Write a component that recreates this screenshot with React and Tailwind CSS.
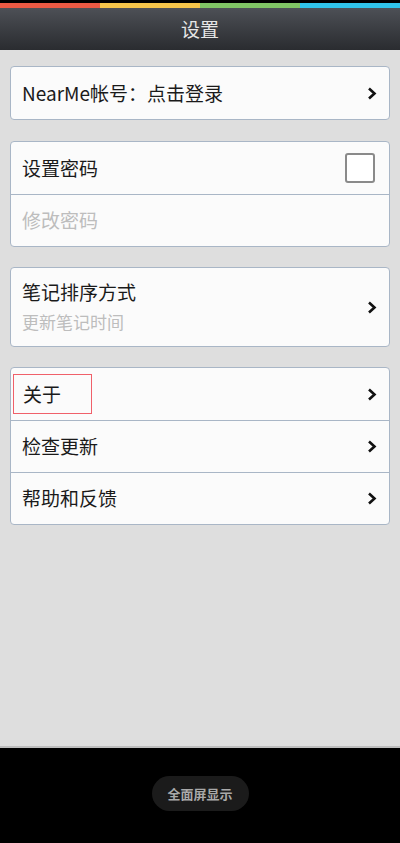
import React from 'react';

const Chevron = () => (
  <svg width="10" height="13" viewBox="0 0 10 13" className="shrink-0">
    <polyline points="2,1.5 7.5,6.5 2,11.5" fill="none" stroke="#111" strokeWidth="2.6" strokeLinejoin="miter" />
  </svg>
);

const Row = ({ children, right, divider }) => (
  <div className={`h-[52px] flex items-center justify-between pl-[11px] pr-[12px] ${divider ? 'border-t border-[#a9b6c6]' : ''}`}>
    {children}
    {right}
  </div>
);

const Card = ({ children, className = '' }) => (
  <div className={`mx-[10px] bg-[#fbfbfb] border border-[#a9b6c6] rounded-[4px] overflow-hidden ${className}`}>
    {children}
  </div>
);

const App = () => {
  return (
    <div className="w-[400px] h-[843px] flex flex-col bg-black" style={{ fontFamily: '"Noto Sans CJK SC", "Noto Sans", sans-serif' }}>
      {/* 顶部彩条 */}
      <div className="h-[3px] bg-black" />
      <div className="h-[5px] flex">
        <div className="flex-1 bg-[#ec5a44]" />
        <div className="flex-1 bg-[#f6c54a]" />
        <div className="flex-1 bg-[#80c565]" />
        <div className="flex-1 bg-[#30c4ea]" />
      </div>
      {/* 标题栏 */}
      <div className="h-[42px] flex items-center justify-center bg-gradient-to-b from-[#4d5056] to-[#2a2c30]">
        <span className="text-[19px] text-[#e6e6e6]">设置</span>
      </div>

      {/* 设置列表 */}
      <div className="h-[698px] bg-[#dedede] pt-[16px] border-b-2 border-[#bdbdbd]">
        <Card>
          <Row right={<Chevron />}>
            <span className="text-[19px] text-[#1a1a1a]">NearMe帐号：点击登录</span>
          </Row>
        </Card>

        <Card className="mt-[21px]">
          <Row right={<div className="w-[30px] h-[30px] border-2 border-[#8a8a8a] rounded-[3px] bg-white mr-[2px]" />}>
            <span className="text-[19px] text-[#1a1a1a]">设置密码</span>
          </Row>
          <Row divider>
            <span className="text-[19px] text-[#bdbdbd]">修改密码</span>
          </Row>
        </Card>

        <Card className="mt-[20px]">
          <div className="h-[78px] flex items-center justify-between pl-[11px] pr-[12px]">
            <div className="flex flex-col">
              <span className="text-[19px] leading-[30px] text-[#1a1a1a]">笔记排序方式</span>
              <span className="text-[17px] leading-[30px] text-[#bdbdbd]">更新笔记时间</span>
            </div>
            <Chevron />
          </div>
        </Card>

        <Card className="mt-[20px]">
          <Row right={<Chevron />}>
            <div className="-ml-[9px] w-[79px] h-[40px] border border-[#f0606a] flex items-center pl-[9px]">
              <span className="text-[19px] text-[#1a1a1a]">关于</span>
            </div>
          </Row>
          <Row divider right={<Chevron />}>
            <span className="text-[19px] text-[#1a1a1a]">检查更新</span>
          </Row>
          <Row divider right={<Chevron />}>
            <span className="text-[19px] text-[#1a1a1a]">帮助和反馈</span>
          </Row>
        </Card>
      </div>

      {/* 底部 */}
      <div className="flex-1 bg-black flex items-start justify-center pt-[28px]">
        <div className="w-[97px] h-[35px] rounded-full bg-[#1b1b1b] flex items-center justify-center">
          <span className="text-[13px] font-bold text-[#a9a9a9]">全面屏显示</span>
        </div>
      </div>
    </div>
  );
};

export default App;
